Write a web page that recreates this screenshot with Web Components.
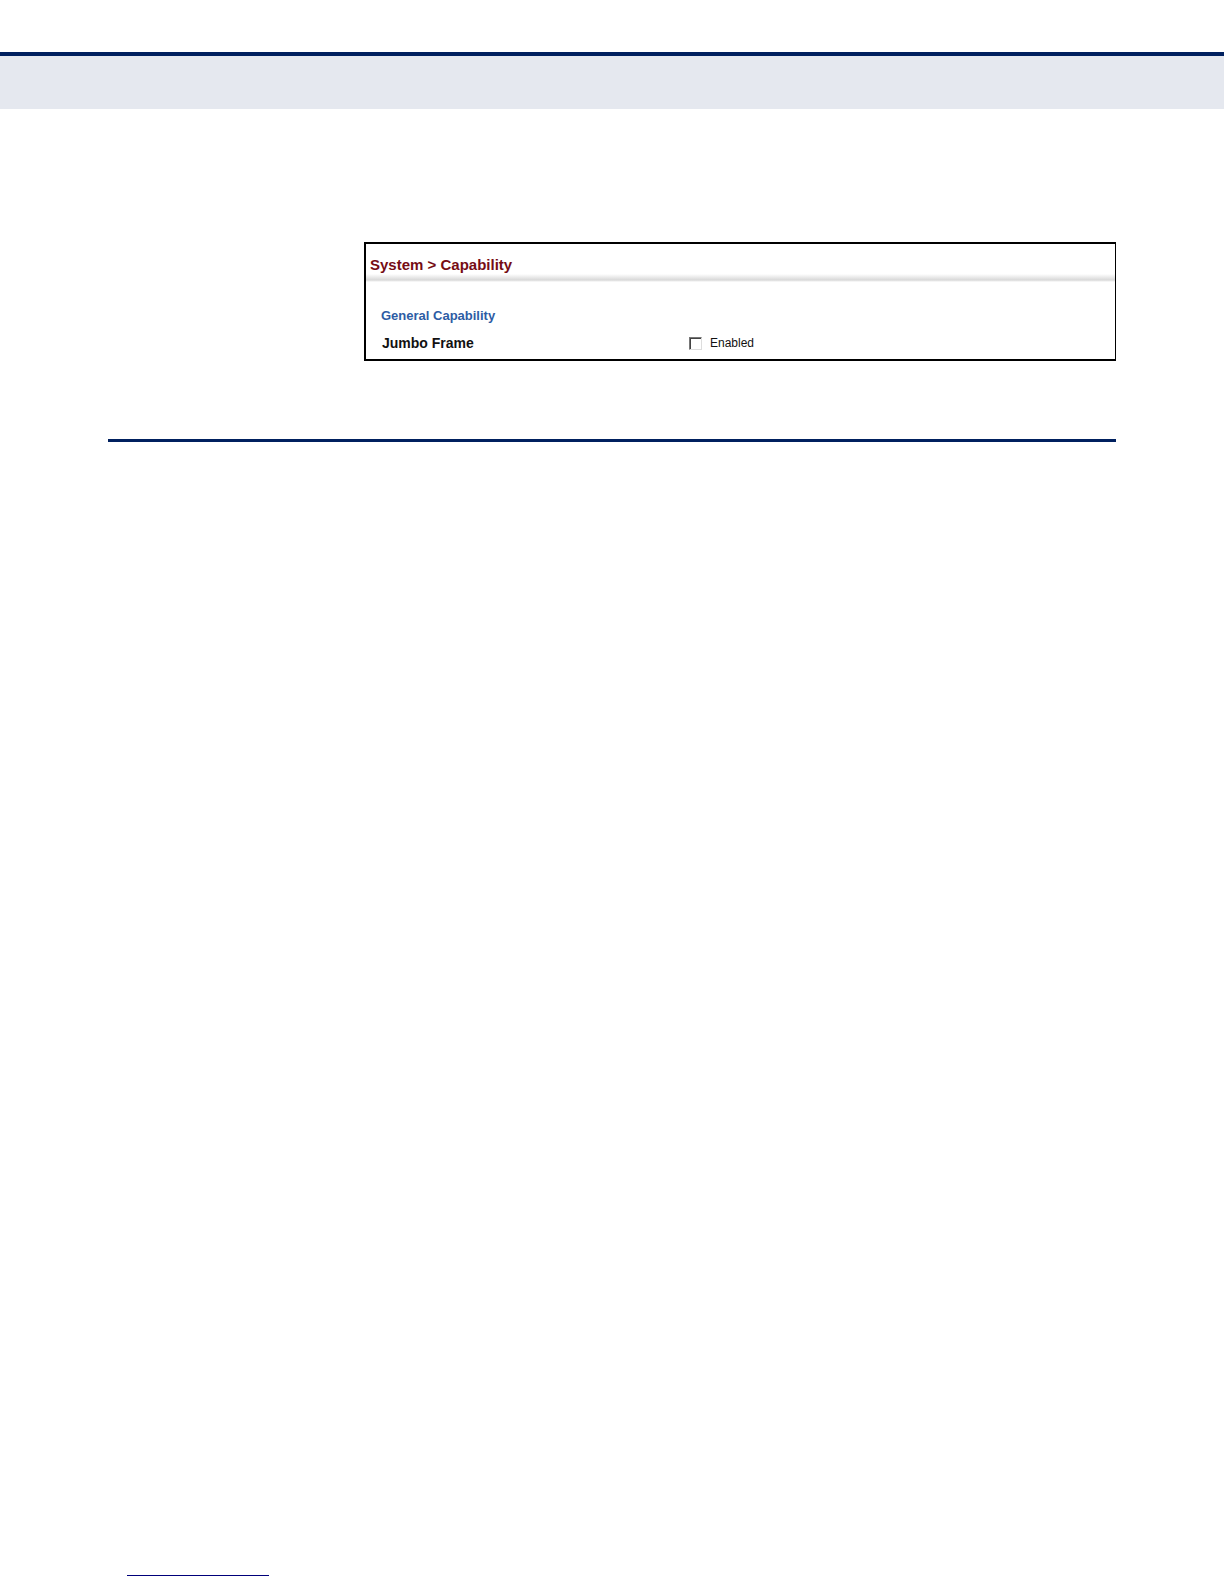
<!DOCTYPE html>
<html lang="en">
<head>
<meta charset="utf-8">
<title>System Capability</title>
<style>
body { margin: 0; background: #fff; font-family: "Liberation Sans", Arial, sans-serif; }
</style>
</head>
<body>
<manual-page>
  <capability-panel heading="System &gt; Capability">
    <setting-group heading="General Capability">
      <setting-toggle name="Jumbo Frame">Enabled</setting-toggle>
    </setting-group>
  </capability-panel>
</manual-page>
<script>
const define = (name, render) => customElements.define(name, class extends HTMLElement {
  constructor() {
    super();
    this.attachShadow({ mode: "open" });
  }
  connectedCallback() {
    this.shadowRoot.innerHTML = render(this);
  }
});

define("page-banner", () => `
  <style>
    :host { display: block; height: 53px; margin-top: 52px; border-top: 4px solid #00205f; background: #e5e8ef; }
  </style>`);

define("section-rule", () => `
  <style>
    :host { display: block; height: 3px; background: #00205f; }
  </style>`);

define("footer-rule", () => `
  <style>
    :host { display: block; width: 142px; height: 1px; margin: auto 0 8px 127px; background: #00007a; }
  </style>`);

define("manual-page", () => `
  <style>
    :host { display: flex; flex-direction: column; min-height: 100vh; }
    main { display: flex; flex-direction: column; gap: 78px; padding: 133px 108px 0; }
    .figure { padding-left: 256px; }
  </style>
  <page-banner></page-banner>
  <main>
    <div class="figure"><slot></slot></div>
    <section-rule></section-rule>
  </main>
  <footer-rule></footer-rule>`);

define("capability-panel", el => `
  <style>
    :host { display: block; border: 2px solid #000; border-right-width: 1px; background: #fff; }
    h1 { margin: 0; padding: 9px 4px 5px; font-size: 15px; line-height: 24px; color: #760c14;
         background: linear-gradient(#fff, #d8d8d8 75%, #fff) bottom / 100% 8px no-repeat; }
  </style>
  <h1>${el.getAttribute("heading").replace(">", "&gt;")}</h1>
  <slot></slot>`);

define("setting-group", el => `
  <style>
    :host { display: block; padding: 22px 15px 4px; }
    h2 { margin: 0 0 3px; font-size: 13px; line-height: 24px; color: #2d5ca4; }
  </style>
  <h2>${el.getAttribute("heading")}</h2>
  <slot></slot>`);

define("setting-toggle", el => `
  <style>
    :host { display: grid; grid-template-columns: 308px 1fr; align-items: center; line-height: 24px; color: #111; }
    .name { padding-left: 1px; font-size: 14px; font-weight: bold; }
    .choice { display: flex; align-items: center; gap: 8px; font-size: 12px; }
    input { appearance: none; box-sizing: border-box; width: 13px; height: 13px; margin: 0; background: #fff;
            border: 1px solid; border-color: #777 #ddd #ddd #777; box-shadow: inset 1px 1px #444; }
    input:checked { background: #444; }
  </style>
  <label class="name" for="toggle">${el.getAttribute("name")}</label>
  <label class="choice"><input id="toggle" type="checkbox"><slot></slot></label>`);
</script>
</body>
</html>
